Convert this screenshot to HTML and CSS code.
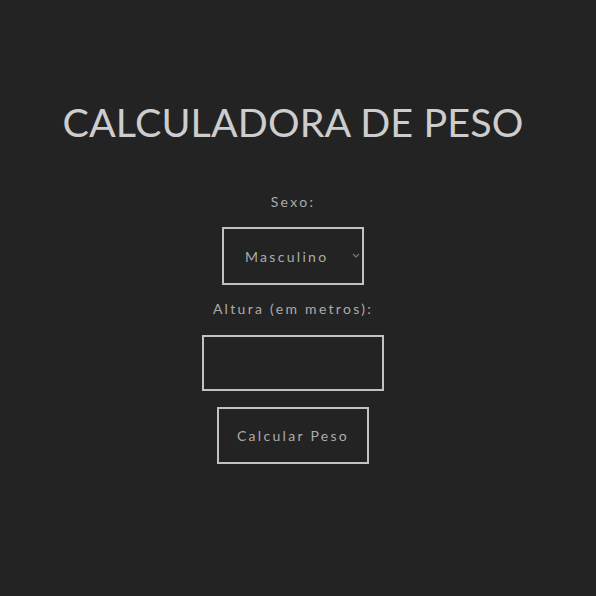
FILE: index.html
```html
<!DOCTYPE html>
<html lang="pt">
<head>
<meta charset="utf-8">
<title>Calculadora de Peso</title>
<link rel="stylesheet" href="styles.css">
</head>
<body>
<main class="app">
  <h1 class="title">CALCULADORA DE PESO</h1>
  <form class="form">
    <label class="label" for="sexo">Sexo:</label>
    <div class="select-wrap">
      <select id="sexo" class="select">
        <option>Masculino</option>
        <option>Feminino</option>
      </select>
      <svg class="chev" width="8" height="5" viewBox="0 0 8 5"><path d="M1 1 L4 4 L7 1" fill="none" stroke="#7a7a7a" stroke-width="1.2"/></svg>
    </div>
    <label class="label label-altura" for="altura">Altura (em metros):</label>
    <input id="altura" class="input" type="text">
    <button type="button" class="button">Calcular Peso</button>
  </form>
</main>
</body>
</html>
```
FILE: styles.css
```css
html, body {
  margin: 0;
  padding: 0;
  background: #232323;
}
body {
  font-family: Lato, "Open Sans", sans-serif;
  color: #c8c8c8;
}
.app {
  width: 586px;
  display: flex;
  flex-direction: column;
  align-items: center;
  padding-top: 98px;
}
.title {
  margin: 0;
  font-weight: 400;
  font-size: 39.5px;
  letter-spacing: 0.1px;
  line-height: 48px;
  color: #cdcdcd;
}
.form {
  display: flex;
  flex-direction: column;
  align-items: center;
  margin-top: 48px;
}
.label {
  font-size: 14px;
  letter-spacing: 2.3px;
  line-height: 16px;
  color: #ababab;
}
.select-wrap {
  position: relative;
  margin-top: 17px;
}
.select {
  appearance: none;
  -webkit-appearance: none;
  display: block;
  box-sizing: border-box;
  width: 142px;
  height: 58px;
  background: #232323;
  border: 2px solid #c2c2c2;
  border-radius: 0;
  color: #ababab;
  font-family: Lato, "Open Sans", sans-serif;
  font-size: 14px;
  letter-spacing: 2.3px;
  padding: 0 0 0 21px;
  outline: none;
}
.chev {
  position: absolute;
  right: 4px;
  top: 26px;
}
.label-altura {
  margin-top: 16px;
}
.input {
  display: block;
  box-sizing: border-box;
  width: 182px;
  height: 56px;
  margin-top: 18px;
  background: #232323;
  border: 2px solid #c2c2c2;
  border-radius: 0;
  outline: none;
  color: #ababab;
}
.button {
  display: block;
  box-sizing: border-box;
  width: 152px;
  height: 57px;
  margin-top: 16px;
  background: #232323;
  border: 2px solid #c2c2c2;
  border-radius: 0;
  color: #ababab;
  font-family: Lato, "Open Sans", sans-serif;
  font-size: 14px;
  letter-spacing: 2.3px;
  cursor: pointer;
}
```
